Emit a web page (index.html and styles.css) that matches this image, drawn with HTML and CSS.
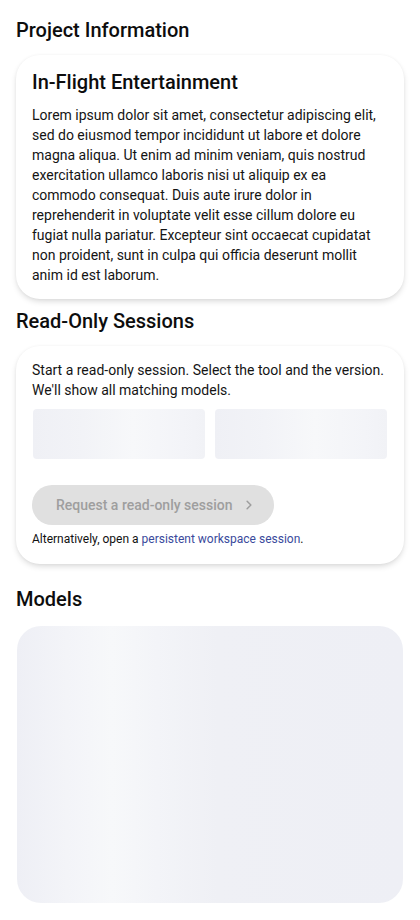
FILE: index.html
```html
<!DOCTYPE html>
<html lang="en">
<head>
<meta charset="utf-8">
<title>Project Information</title>
<link rel="stylesheet" href="styles.css">
</head>
<body>
<main class="page">
  <section class="section">
    <h2 class="section-title">Project Information</h2>
    <div class="card card-info">
      <h3 class="card-title">In-Flight Entertainment</h3>
      <p class="card-text">Lorem ipsum dolor sit amet, consectetur adipiscing elit, sed do eiusmod tempor incididunt ut labore et dolore magna aliqua. Ut enim ad minim veniam, quis nostrud exercitation ullamco laboris nisi ut aliquip ex ea commodo consequat. Duis aute irure dolor in reprehenderit in voluptate velit esse cillum dolore eu fugiat nulla pariatur. Excepteur sint occaecat cupidatat non proident, sunt in culpa qui officia deserunt mollit anim id est laborum.</p>
    </div>
  </section>

  <section class="section">
    <h2 class="section-title">Read-Only Sessions</h2>
    <div class="card card-sessions">
      <p class="card-text">Start a read-only session. Select the tool and the version. We'll show all matching models.</p>
      <div class="selects">
        <div class="skeleton skeleton-small"></div>
        <div class="skeleton skeleton-small"></div>
      </div>
      <button class="request-btn" type="button" disabled>
        <span>Request a read-only session</span>
        <svg class="chevron" viewBox="0 0 24 24" width="18" height="18" aria-hidden="true"><path d="M9.5 7l5 5-5 5" fill="none" stroke="currentColor" stroke-width="2" stroke-linecap="round" stroke-linejoin="round"/></svg>
      </button>
      <p class="footnote">Alternatively, open a <a class="link" href="#">persistent workspace session</a>.</p>
    </div>
  </section>

  <section class="section section-models">
    <h2 class="section-title">Models</h2>
    <div class="skeleton skeleton-large"></div>
  </section>
</main>
</body>
</html>
```

FILE: styles.css
```css
* { box-sizing: border-box; }

html, body {
  margin: 0;
  padding: 0;
  background: #ffffff;
}

body {
  font-family: Roboto, "Liberation Sans", Arial, sans-serif;
  color: #111111;
}

.page {
  padding: 16px 16px 0;
  display: flex;
  flex-direction: column;
}

.section {
  display: flex;
  flex-direction: column;
}

.section-title {
  margin: 0 0 11px;
  font-size: 20px;
  line-height: 28px;
  font-weight: 500;
  color: #0d0d0d;
}

.card {
  background: #ffffff;
  border-radius: 24px;
  box-shadow: 0 3px 6px -1px rgba(0, 0, 0, 0.16), 0 0 3px rgba(0, 0, 0, 0.04);
  padding: 14px 16px;
}

.card-info {
  margin-bottom: 8px;
  padding-top: 13px;
  padding-bottom: 14px;
}

.card-title {
  margin: 0 0 9px;
  font-size: 20px;
  line-height: 28px;
  font-weight: 500;
  color: #0d0d0d;
}

.card-text {
  margin: 0;
  font-size: 14px;
  line-height: 20px;
  color: #141414;
}

.card-sessions {
  display: flex;
  flex-direction: column;
  padding-bottom: 17px;
  margin-bottom: 21px;
}

.selects {
  display: grid;
  grid-template-columns: 1fr 1fr;
  gap: 10px;
  margin: 9px 1px 0;
}

.skeleton {
  border-radius: 4px;
}

.skeleton-small {
  height: 50px;
  background: linear-gradient(90deg, #eff0f5 0, #f2f3f7 50px, #f7f8fa 100px, #f3f4f8 150px, #f1f2f6 172px);
}

.request-btn {
  align-self: flex-start;
  margin-top: 26px;
  height: 40px;
  border: none;
  border-radius: 20px;
  background: #e0e0e0;
  color: #9e9e9e;
  font-family: inherit;
  font-size: 14px;
  font-weight: 500;
  padding: 0 16px 0 24px;
  display: flex;
  align-items: center;
  gap: 8px;
  cursor: default;
}

.chevron {
  display: block;
}

.footnote {
  margin: 6px 0 0;
  font-size: 12px;
  line-height: 16px;
  color: #111111;
}

.link {
  color: #3a4a9c;
  text-decoration: none;
}

.section-models .section-title {
  margin-bottom: 13px;
}

.skeleton-large {
  margin: 0 1px;
  height: 277px;
  border-radius: 24px;
  background: linear-gradient(90deg, #eeeff5 0, #f3f4f8 50px, #f7f8fa 95px, #f3f4f8 140px, #eff0f5 200px, #eeeff5 100%);
}
```
